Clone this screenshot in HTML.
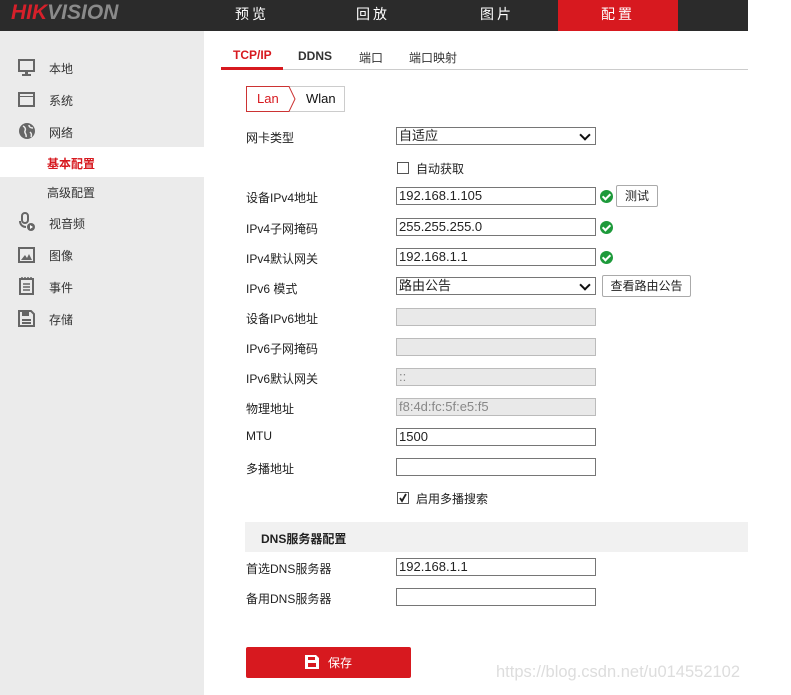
<!DOCTYPE html>
<html><head><meta charset="utf-8"><style>
*{margin:0;padding:0;box-sizing:border-box}
body{width:791px;height:695px;background:#fff;font-family:"Liberation Sans","Noto Sans CJK SC",sans-serif;font-size:12px;color:#222;position:relative;overflow:hidden}
.a{position:absolute}
.hdr{left:0;top:0;width:748px;height:31px;background:#2b2b2b}
.nav{top:0;height:31px;width:120px;text-align:center;line-height:28px;color:#fff;font-size:14px;letter-spacing:3px}
.side{left:0;top:31px;width:204px;height:664px;background:#ebebeb}
.si{left:49px;font-size:12px;color:#333}
.lbl{left:246px;font-size:12px;color:#222}
.inp{left:396px;width:200px;height:18px;border:1px solid #767676;background:#fff;font-size:13px;line-height:16px;padding-left:2px}
.dis{border-color:#bbb;background:#e9e9e9;color:#888}
.sel::after{content:"";position:absolute;right:6px;top:3px;width:6px;height:6px;border-right:2px solid #111;border-bottom:2px solid #111;transform:rotate(45deg)}
.ok{left:600px;width:13px;height:13px;border-radius:50%;background:#1e9a3b}
.ok::after{content:"";position:absolute;left:4px;top:2px;width:3px;height:6px;border-right:2px solid #fff;border-bottom:2px solid #fff;transform:rotate(45deg)}
.btn{height:22px;border:1px solid #aaa;border-radius:2px;background:#fff;font-size:12px;line-height:20px;text-align:center}
.cb{left:397px;width:12px;height:12px;border:1px solid #555;background:#fff}
</style></head><body>
<div class="a hdr"></div>
<div class="a" style="left:11px;top:2px;font:italic bold 21px 'Liberation Sans',sans-serif;letter-spacing:0px;color:#d6202a;line-height:21px">HIK<span style="color:#8a8a8a">VISION</span></div>
<div class="a nav" style="left:192px">预览</div>
<div class="a nav" style="left:313px">回放</div>
<div class="a nav" style="left:437px">图片</div>
<div class="a nav" style="left:558px;background:#d7191f">配置</div>

<div class="a side"></div>
<div class="a" style="left:0;top:147px;width:204px;height:30px;background:#fff"></div>
<svg class="a" style="left:18px;top:59px" width="18" height="17" viewBox="0 0 18 17"><rect x="1" y="1" width="15" height="11" fill="none" stroke="#666" stroke-width="2"/><rect x="7" y="12" width="3" height="3" fill="#666"/><rect x="4" y="15" width="9" height="2" fill="#666"/></svg>
<div class="a si" style="top:60px">本地</div>
<svg class="a" style="left:18px;top:92px" width="18" height="15"><rect x="1" y="1" width="15" height="13" fill="none" stroke="#666" stroke-width="2"/><rect x="1" y="4" width="15" height="1" fill="#666"/></svg>
<div class="a si" style="top:92px">系统</div>
<svg class="a" style="left:18px;top:122px" width="18" height="18"><circle cx="9" cy="9" r="8" fill="#666"/><path d="M5 4c2 1 3 3 2 5s2 3 1 6M11 3c0 2 2 3 4 3M12 10c1 1 2 2 1 5" stroke="#ebebeb" stroke-width="1.5" fill="none"/></svg>
<div class="a si" style="top:124px">网络</div>
<div class="a" style="left:47px;top:155px;color:#d7191f;font-weight:bold">基本配置</div>
<div class="a" style="left:47px;top:184px;color:#333">高级配置</div>
<svg class="a" style="left:18px;top:212px" width="18" height="20"><rect x="4" y="1" width="6" height="10" rx="3" fill="none" stroke="#666" stroke-width="2"/><path d="M2 9c0 4 3 6 6 6" stroke="#666" stroke-width="2" fill="none"/><circle cx="13" cy="15" r="4" fill="#666"/><path d="M12 13v4l3-2z" fill="#fff"/></svg>
<div class="a si" style="top:215px">视音频</div>
<svg class="a" style="left:18px;top:247px" width="18" height="16"><rect x="1" y="1" width="15" height="14" fill="none" stroke="#666" stroke-width="2"/><path d="M3 13l4-5 2 3 2-4 3 6z" fill="#666"/></svg>
<div class="a si" style="top:247px">图像</div>
<svg class="a" style="left:18px;top:277px" width="18" height="18"><rect x="2" y="2" width="13" height="15" fill="none" stroke="#666" stroke-width="2"/><path d="M5 7h7M5 10h7M5 13h7M4 0v3M7 0v3M10 0v3M13 0v3" stroke="#666" stroke-width="1.5"/></svg>
<div class="a si" style="top:279px">事件</div>
<svg class="a" style="left:18px;top:310px" width="18" height="17"><path d="M1 1h12l3 3v12H1z" fill="none" stroke="#666" stroke-width="2"/><rect x="4" y="2" width="7" height="4" fill="#666"/><rect x="4" y="9" width="9" height="2" fill="#666"/><rect x="4" y="12" width="9" height="2" fill="#666"/></svg>
<div class="a si" style="top:311px">存储</div>

<div class="a" style="left:221px;top:69px;width:527px;height:1px;background:#ccc"></div>
<div class="a" style="left:221px;top:67px;width:62px;height:3px;background:#d7191f"></div>
<div class="a" style="left:233px;top:48px;color:#d7191f;font-weight:bold;font-size:12px">TCP/IP</div>
<div class="a" style="left:298px;top:49px;color:#333;font-weight:bold">DDNS</div>
<div class="a" style="left:359px;top:49px;color:#333">端口</div>
<div class="a" style="left:409px;top:49px;color:#333">端口映射</div>

<div class="a" style="left:246px;top:86px;width:99px;height:26px;border:1px solid #ccc;border-left:1px solid #c33"></div>
<svg class="a" style="left:246px;top:86px" width="50" height="26"><path d="M0.5 0.5H43L49 13L43 25.5H0.5Z" fill="#fff" stroke="#c33"/></svg>
<div class="a" style="left:257px;top:91px;color:#d7191f;font-size:13px">Lan</div>
<div class="a" style="left:306px;top:91px;color:#111;font-size:13px">Wlan</div>

<div class="a lbl" style="top:129px">网卡类型</div>
<div class="a inp sel" style="top:127px">自适应</div>
<div class="a cb" style="top:162px"></div><div class="a" style="left:416px;top:160px">自动获取</div>
<div class="a lbl" style="top:189px">设备IPv4地址</div>
<div class="a inp" style="top:187px">192.168.1.105</div><div class="a ok" style="top:190px"></div>
<div class="a btn" style="left:616px;top:185px;width:42px">测试</div>
<div class="a lbl" style="top:220px">IPv4子网掩码</div>
<div class="a inp" style="top:218px">255.255.255.0</div><div class="a ok" style="top:221px"></div>
<div class="a lbl" style="top:250px">IPv4默认网关</div>
<div class="a inp" style="top:248px">192.168.1.1</div><div class="a ok" style="top:251px"></div>
<div class="a lbl" style="top:280px">IPv6 模式</div>
<div class="a inp sel" style="top:277px">路由公告</div>
<div class="a btn" style="left:602px;top:275px;width:89px">查看路由公告</div>
<div class="a lbl" style="top:310px">设备IPv6地址</div>
<div class="a inp dis" style="top:308px"></div>
<div class="a lbl" style="top:340px">IPv6子网掩码</div>
<div class="a inp dis" style="top:338px"></div>
<div class="a lbl" style="top:370px">IPv6默认网关</div>
<div class="a inp dis" style="top:368px">::</div>
<div class="a lbl" style="top:400px">物理地址</div>
<div class="a inp dis" style="top:398px">f8:4d:fc:5f:e5:f5</div>
<div class="a lbl" style="top:429px">MTU</div>
<div class="a inp" style="top:428px">1500</div>
<div class="a lbl" style="top:460px">多播地址</div>
<div class="a inp" style="top:458px"></div>
<div class="a cb" style="top:492px"><svg width="10" height="10" style="position:absolute;left:0;top:0"><path d="M2 5l2 3 4-7" stroke="#222" stroke-width="1.8" fill="none"/></svg></div>
<div class="a" style="left:416px;top:490px">启用多播搜索</div>

<div class="a" style="left:245px;top:522px;width:503px;height:30px;background:#f1f1f1"></div>
<div class="a" style="left:261px;top:530px;font-weight:bold">DNS服务器配置</div>
<div class="a lbl" style="top:560px">首选DNS服务器</div>
<div class="a inp" style="top:558px">192.168.1.1</div>
<div class="a lbl" style="top:590px">备用DNS服务器</div>
<div class="a inp" style="top:588px"></div>

<div class="a" style="left:246px;top:647px;width:165px;height:31px;background:#d7191f;border-radius:2px"></div>
<svg class="a" style="left:305px;top:655px" width="14" height="14"><path d="M0 0h11l3 3v11H0z" fill="#fff"/><rect x="3" y="2" width="7" height="3" fill="#d7191f"/><rect x="3" y="8" width="8" height="4" fill="#d7191f"/></svg>
<div class="a" style="left:328px;top:654px;color:#fff;font-size:12px">保存</div>
<div class="a" style="left:496px;top:663px;color:#ddd;font-size:16.5px">https://blog.csdn.net/u014552102</div>
</body></html>
